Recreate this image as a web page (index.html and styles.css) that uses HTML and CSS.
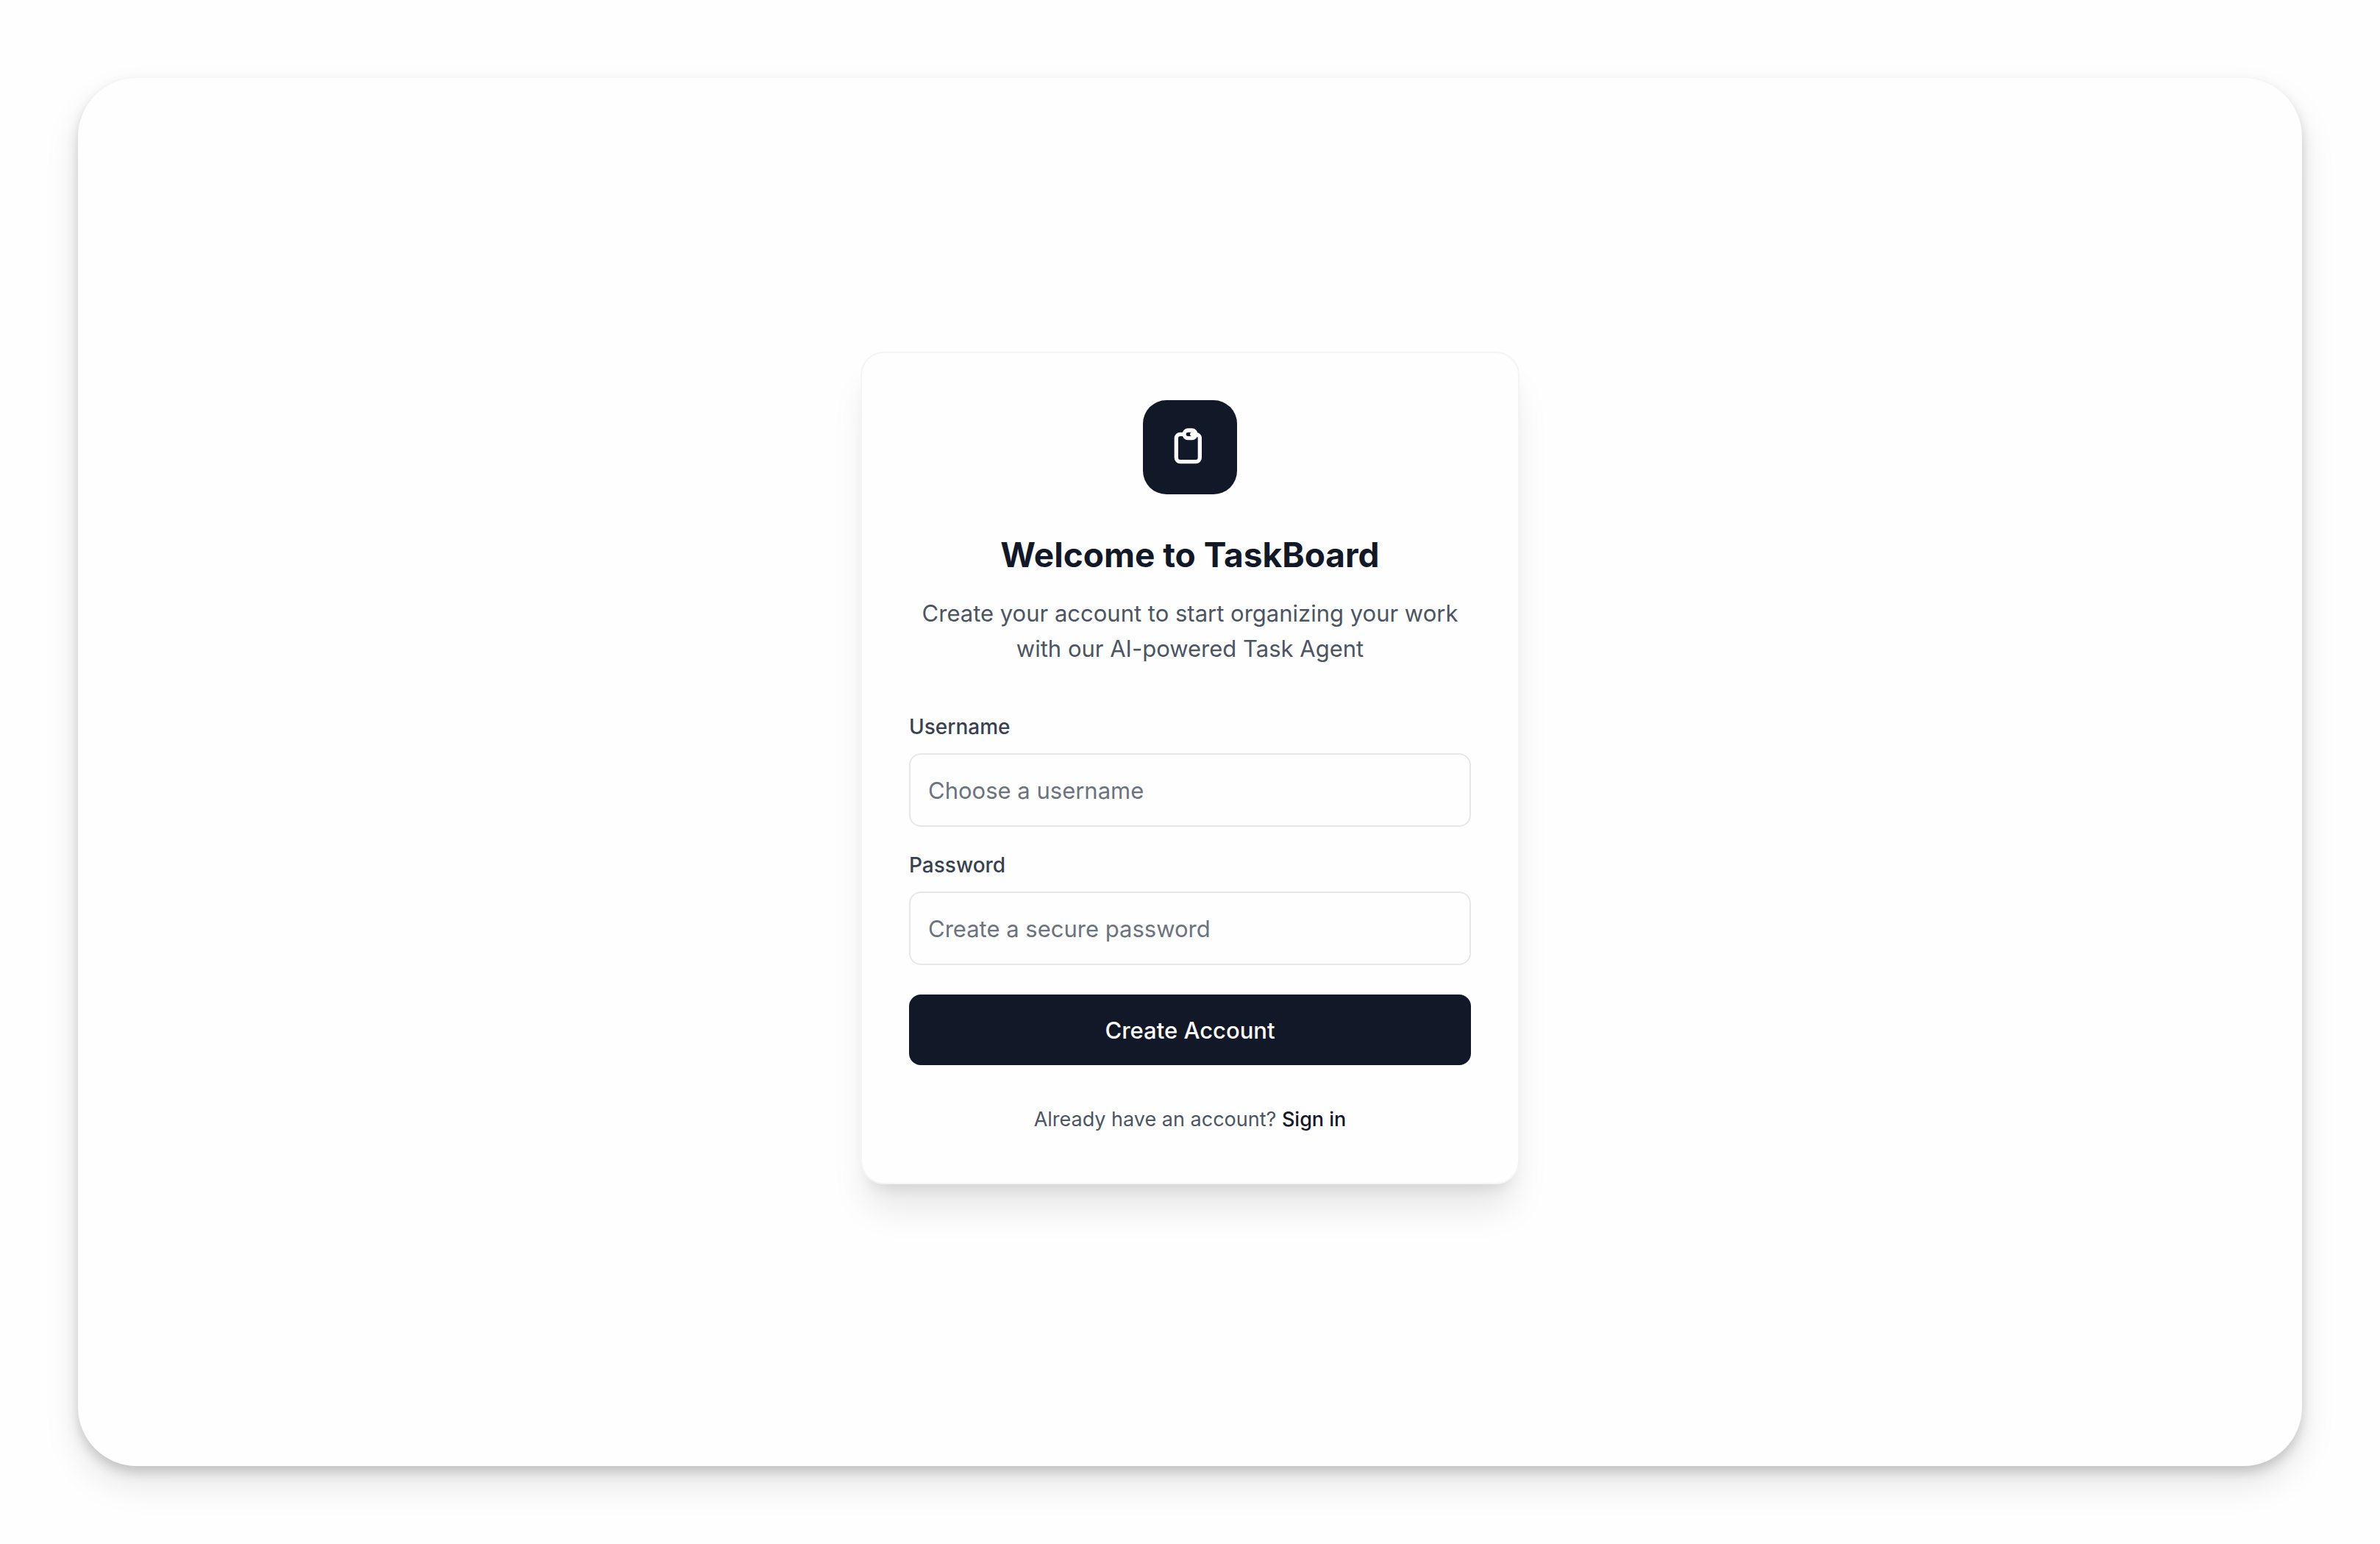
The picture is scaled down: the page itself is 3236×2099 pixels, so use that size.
FILE: index.html
```html
<!DOCTYPE html>
<html lang="en">
<head>
  <meta charset="utf-8">
  <meta name="viewport" content="width=device-width, initial-scale=1">
  <title>TaskBoard</title>
  <link rel="stylesheet" href="styles.css">
</head>
<body>
  <main class="panel">
    <section class="card">
      <header class="intro">
        <div class="logo">
          <svg class="logo-icon" viewBox="0 0 24 24" fill="none" stroke="currentColor" stroke-width="2" stroke-linecap="round" stroke-linejoin="round" aria-hidden="true">
            <path d="M9 5H7a2 2 0 00-2 2v10a2 2 0 002 2h8a2 2 0 002-2V7a2 2 0 00-2-2h-2M9 5a2 2 0 002 2h2a2 2 0 002-2M9 5a2 2 0 012-2h2a2 2 0 012 2"/>
          </svg>
        </div>
        <h1 class="title">Welcome to TaskBoard</h1>
        <p class="subtitle">Create your account to start organizing your work<br>with our AI-powered Task Agent</p>
      </header>
      <form class="form">
        <div class="field">
          <label class="label" for="username">Username</label>
          <input class="input" id="username" type="text" placeholder="Choose a username">
        </div>
        <div class="field">
          <label class="label" for="password">Password</label>
          <input class="input" id="password" type="password" placeholder="Create a secure password">
        </div>
        <button class="submit" type="submit">Create Account</button>
      </form>
      <p class="footer">Already have an account? <a class="link" href="#">Sign in</a></p>
    </section>
  </main>
</body>
</html>
```
FILE: styles.css
```css
* {
  box-sizing: border-box;
}

body {
  margin: 0;
  min-height: 100vh;
  padding: 106px;
  display: flex;
  background: #fefefe;
  color: #111827;
  font-family: Inter, "Liberation Sans", sans-serif;
}

h1,
p {
  margin: 0;
}

.panel {
  flex: 1;
  display: flex;
  align-items: center;
  justify-content: center;
  padding-bottom: 12px;
  border-radius: 80px;
  background: #fefefe;
  box-shadow: 0 24px 48px rgba(0, 0, 0, 0.1), 0 8px 16px rgba(0, 0, 0, 0.17);
}

.card {
  width: 100%;
  max-width: 896px;
  padding: 64px;
  border: 2px solid #f3f4f6;
  border-radius: 32px;
  background: #fefefe;
  box-shadow: 0 40px 50px -10px rgba(0, 0, 0, 0.1), 0 16px 20px -12px rgba(0, 0, 0, 0.1);
}

.intro {
  display: flex;
  flex-direction: column;
  align-items: center;
  margin-bottom: 62px;
  text-align: center;
}

.logo {
  display: flex;
  align-items: center;
  justify-content: center;
  width: 128px;
  height: 128px;
  padding-top: 2px;
  margin-bottom: 50px;
  border-radius: 32px;
  background: #111827;
  color: #fff;
}

.logo-icon {
  width: 64px;
  height: 64px;
}

.title {
  margin-bottom: 24px;
  font-size: 46px;
  font-weight: 700;
  line-height: 64px;
}

.subtitle {
  color: #4b5563;
  font-size: 31px;
  line-height: 48px;
}

.form {
  display: flex;
  flex-direction: column;
}

.field {
  display: flex;
  flex-direction: column;
  gap: 16px;
  margin-bottom: 32px;
}

.label {
  color: #374151;
  font-size: 28px;
  font-weight: 500;
  line-height: 40px;
}

.input {
  width: 100%;
  height: 100px;
  padding: 2px 24px 0;
  border: 2px solid #e5e7eb;
  border-radius: 16px;
  background: #fefefe;
  color: #111827;
  font: inherit;
  font-size: 31px;
}

.input::placeholder {
  color: #6b7280;
  opacity: 1;
}

.submit {
  height: 96px;
  margin-top: 8px;
  padding: 2px 24px 0;
  border: 0;
  border-radius: 16px;
  background: #111827;
  color: #fff;
  font: inherit;
  font-size: 31px;
  font-weight: 500;
}

.footer {
  margin: 54px 0 2px;
  color: #4b5563;
  font-size: 27px;
  line-height: 40px;
  text-align: center;
}

.link {
  color: #111827;
  font-weight: 500;
  text-decoration: none;
}
```
